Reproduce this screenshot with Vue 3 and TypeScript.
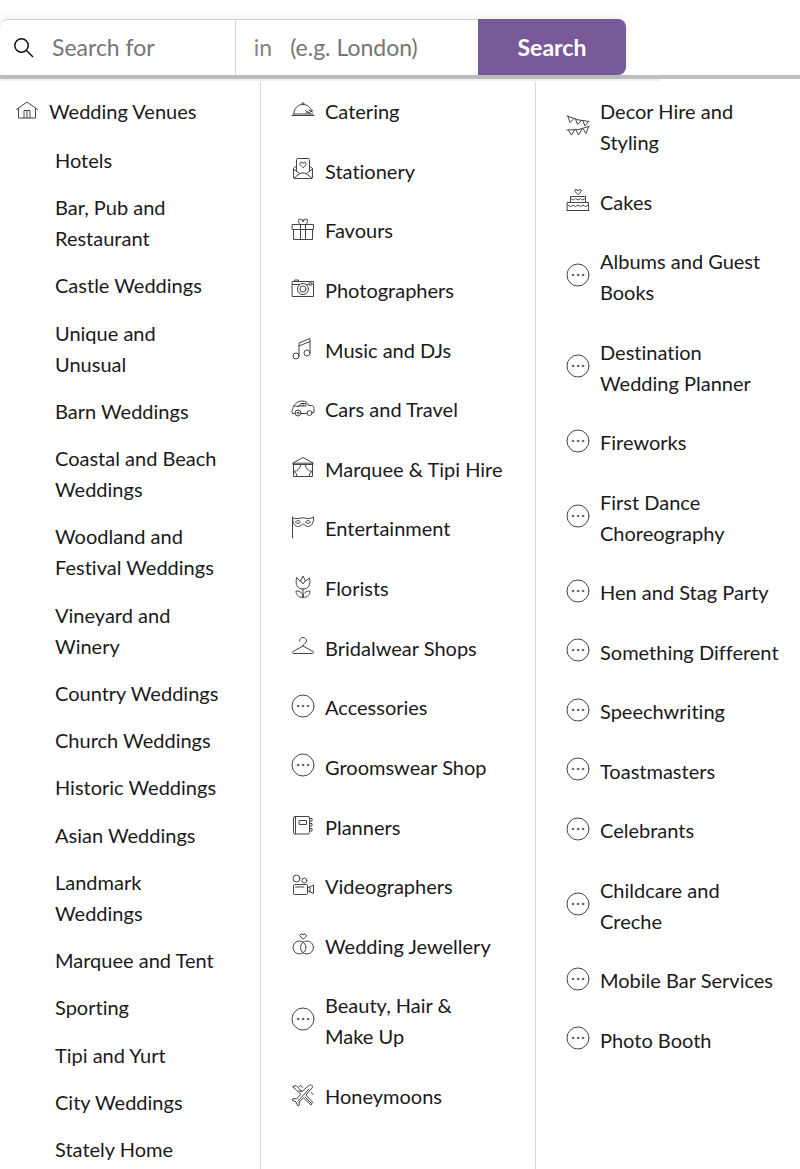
<script setup lang="ts">
interface Item {
  label: string
  icon: string
}

const venues: string[] = [
  'Hotels', 'Bar, Pub and Restaurant', 'Castle Weddings', 'Unique and Unusual', 'Barn Weddings',
  'Coastal and Beach Weddings', 'Woodland and Festival Weddings', 'Vineyard and Winery',
  'Country Weddings', 'Church Weddings', 'Historic Weddings', 'Asian Weddings',
  'Landmark Weddings', 'Marquee and Tent', 'Sporting', 'Tipi and Yurt', 'City Weddings', 'Stately Home',
]

const icons: Record<string, string> = {
  house: 'M1.5 11.5 12 4l10.5 7.5M3.500 10.500v9.500h17v-9.500M9 20v-7.500h6V20M12 12.500V20',
  dome: 'M1 17.500h22M2 16h20M3 15.500C3 10 7 6.500 12 6.500c4 0 7.500 2.500 8.500 6M11 6.500V5h2v1.500M14.500 12.500l3 2.500 4-2.500M15 15.500l2-2 2.500 2.500M18 12l3.500 2',
  letter: 'M5.5 14V2.500q0-1 1-1h11q1 0 1 1V14M5.500 9l-3 2.500V20q0 1.500 1.500 1.500h16q1.500 0 1.500-1.500v-8.500L18.500 9M2.500 12l6 4.500M21.500 12l-6 4.500M3 21l6-4.500q3-1.500 6 0l6 4.500M12 10.500 9 7.500q-.5-2 1.200-2.300Q11.500 5 12 6.500q.5-1.500 1.800-1.300Q15.500 5.500 15 7.500z',
  gift: 'M1.5 7.500h21v5h-21zM2.500 12.500v10h19v-10M9.500 7.500v15M14.500 7.500v15M12 4.500Q11 2 9 2T7.500 4.500 9 7.500M12 4.500Q13 2 15 2t1.500 2.500-1.500 3M12 2.500v2',
  camera: 'M1.5 5.500h21v15h-21zM3.500 5.500V4h4v1.500M1.500 8.500h7M15.500 8.500h1.500M18.500 7h2.500v2h-2.500zM17.500 13a5.500 5.500 0 1 1-11 0 5.500 5.500 0 0 1 11 0M15 13a3 3 0 1 1-6 0 3 3 0 0 1 6 0',
  music: 'M8 20V7l11-4.500V17M8 10l11-4.500M8 20a3 3 0 1 1-6 0 3 3 0 0 1 6 0M19 17a3 3 0 1 1-6 0 3 3 0 0 1 6 0',
  car: 'M4 17.500H1.500q-1-2 0-4C3 8 6.500 5 11 5c4 0 6 1.500 6.500 4.500h4q1.500.5 1.500 3v4h-2M10 17.500h6M3 10l5 .5L10 7.500h5V10H7M12 7.500V10M10 17a3 3 0 1 1-6 0 3 3 0 0 1 6 0M21 17a2.500 2.500 0 1 1-5 0 2.500 2.500 0 0 1 5 0M8 17a1 1 0 1 1-2 0 1 1 0 0 1 2 0',
  marquee: 'M2 8 12 2.500 22 8zM2.500 8v13.500h19V8M2 9.500h20M10 9.500c-1 4-3 6.500-7 7M14 9.500c1 4 3 6.500 7 7M3 16.500q3 1 3 5M21 16.500q-3 1-3 5',
  mask: 'M1.500 23V2M1.500 3q3 1 6 .5Q12 2 16.500 3.500q3 .5 6-1.500C23 8 20 12 16.500 11.500 14 11 13 9 12 9s-2 2-4.500 2.500C4 12 1.500 8 1.500 3M4.500 7q2.500-3 5 0-2.500 3-5 0M14.500 7q2.500-3 5 0-2.500 3-5 0',
  flower: 'M5.500 3c-1.500 7 1 11 6.500 11s8-4 6.500-11l-4 3L12 1 9.500 6zM9.500 5.500 12 9l2.500-3.500M12 14v8.500M12 22.500c-5 0-7-3-7-6.500 4 0 7 2 7 6.500 0-4.500 3-6.500 7-6.500 0 3.500-2 6.500-7 6.500',
  hanger: 'M8.500 7C8.500 5 10 3.500 12 3.500s3.500 1.500 3.500 3.500c0 2.500-3.500 2.500-3.500 5L2 17.500c-1 .7-.5 2 .5 2h19c1 0 1.500-1.300.5-2L12 12',
  more: 'M23 12a11 11 0 1 1-22 0 11 11 0 0 1 22 0M7.800 12a.8.8 0 1 1-1.600 0 .8.8 0 0 1 1.600 0M12.800 12a.8.8 0 1 1-1.600 0 .8.8 0 0 1 1.600 0M17.800 12a.8.8 0 1 1-1.600 0 .8.8 0 0 1 1.600 0',
  planner: 'M4 3.500h13q1.500 0 1.500 1.500v14.500q0 1.500-1.500 1.500H4q-1.500 0-1.500-1.500V5Q2.500 3.500 4 3.500M4.500 3.500V21M8.500 7.500h7v4h-7zM18.500 5.500H21v2.500h-2.500M18.500 10.500H21V13h-2.500M18.500 15.500H21V18h-2.500',
  video: 'M2.500 12.500q0-1 1-1h12q1 0 1 1v8q0 1-1 1h-12q-1 0-1-1zM16.500 15l6-3v8.500l-6-3M19 14v5M4.500 14H13M9 5.500a3.500 3.500 0 1 1-7 0 3.500 3.500 0 0 1 7 0M16 7.500a2.500 2.500 0 1 1-5 0 2.500 2.500 0 0 1 5 0',
  rings: 'M15 15.500a6.500 6.500 0 1 1-13 0 6.500 6.500 0 0 1 13 0M22.500 15.500a6.500 6.500 0 1 1-13 0 6.500 6.500 0 0 1 13 0M12 7 8.500 3.500 10 2h1.200l.8 1 .8-1H14L15.500 3.500z',
  plane: 'M2 3.500l3-1 6 6 7-6c2-1.500 4.500 0 3 2.500l-6 7 6.500 7-1.500 3-7.500-7-4.500 4 .5 3-1.500 1-2-4-4-2 1-1.500 3.500.5 4-4.500zM8 8l3 .5M14 14l6 6M7 18 18 6M8 3.500l2-1 1.500 2M20.500 9.500l1.500 2',
  bunting: 'M1 3q11 5 22 5.500M2 3.500l2 6 4-4M9.500 6l2 5.500L15.500 7.500M17 8l2 5 3.500-4.500M1 17q11 1 22-3.500M2.500 17.500l3 4.500L8.500 17M10 17l2.500 5 3.500-6M17 15.500l3 5 2.500-6.500',
  cake: 'M1.500 14.500h21v8h-21zM4.500 14.500v-6h15v6M1 22.500h22M2 17q2.500 3 5 0 2.500 3 5 0 2.500 3 5 0 2.500 3 5 0M5 10.500q2.500 3 4.500 0 2.500 3 5 0 2.500 3 4.500 0M12 6.500 9 3.500q-.5-2 1-2T12 3q.5-1.500 2-1.500t1 2z',
}

const services: Item[] = [
  { label: 'Catering', icon: 'dome' },
  { label: 'Stationery', icon: 'letter' },
  { label: 'Favours', icon: 'gift' },
  { label: 'Photographers', icon: 'camera' },
  { label: 'Music and DJs', icon: 'music' },
  { label: 'Cars and Travel', icon: 'car' },
  { label: 'Marquee & Tipi Hire', icon: 'marquee' },
  { label: 'Entertainment', icon: 'mask' },
  { label: 'Florists', icon: 'flower' },
  { label: 'Bridalwear Shops', icon: 'hanger' },
  { label: 'Accessories', icon: 'more' },
  { label: 'Groomswear Shop', icon: 'more' },
  { label: 'Planners', icon: 'planner' },
  { label: 'Videographers', icon: 'video' },
  { label: 'Wedding Jewellery', icon: 'rings' },
  { label: 'Beauty, Hair & Make\u00a0Up', icon: 'more' },
  { label: 'Honeymoons', icon: 'plane' },
]

const extras: Item[] = [
  { label: 'Decor Hire and Styling', icon: 'bunting' },
  { label: 'Cakes', icon: 'cake' },
  ...[
    'Albums and Guest Books', 'Destination Wedding\u00a0Planner', 'Fireworks', 'First Dance Choreography',
    'Hen and Stag Party', 'Something Different', 'Speechwriting', 'Toastmasters', 'Celebrants',
    'Childcare and Creche', 'Mobile Bar Services', 'Photo Booth',
  ].map((label) => ({ label, icon: 'more' })),
]
</script>

<template>
  <div class="page">
    <header class="top">
      <form class="search" @submit.prevent>
        <label class="field what">
          <svg class="glass" viewBox="0 0 20 20" aria-hidden="true"><circle cx="7.5" cy="7.5" r="6.7" /><path d="M12.300 12.300 19 19" /></svg>
          <input type="text" placeholder="Search for" aria-label="Search for" />
        </label>
        <label class="field where">
          <span>in</span>
          <input type="text" placeholder="(e.g. London)" />
        </label>
        <button type="submit">Search</button>
      </form>
    </header>
    <nav class="menu">
      <div class="column first">
        <a href="#" class="entry">
          <svg class="icon" viewBox="0 0 24 24" aria-hidden="true"><path :d="icons.house" /></svg>
          <span>Wedding Venues</span>
        </a>
        <ul class="venues">
          <li v-for="venue in venues" :key="venue"><a href="#">{{ venue }}</a></li>
        </ul>
      </div>
      <ul class="column second">
        <li v-for="item in services" :key="item.label">
          <a href="#" class="entry">
            <svg class="icon" viewBox="0 0 24 24" aria-hidden="true"><path :d="icons[item.icon]" /></svg>
            <span>{{ item.label }}</span>
          </a>
        </li>
      </ul>
      <ul class="column third">
        <li v-for="item in extras" :key="item.label">
          <a href="#" class="entry">
            <svg class="icon" viewBox="0 0 24 24" aria-hidden="true"><path :d="icons[item.icon]" /></svg>
            <span>{{ item.label }}</span>
          </a>
        </li>
      </ul>
    </nav>
  </div>
</template>

<style>
body {
  margin: 0;
  background: #fff;
}
</style>

<style scoped>
.page {
  display: flex;
  flex-direction: column;
  min-height: 100vh;
  box-sizing: border-box;
  font-family: Lato, "Liberation Sans", sans-serif;
  font-size: 20px;
  font-variant-ligatures: none;
  line-height: 31px;
  color: #1a1a1a;
}
ul {
  list-style: none;
  margin: 0;
  padding: 0;
}
a {
  color: inherit;
  text-decoration: none;
}
.top {
  padding-top: 19px;
  border-bottom: 4px solid #c1c1c1;
}
.search {
  display: grid;
  grid-template-columns: 236fr 242fr 149fr;
  width: 78.3%;
  height: 56px;
  border-radius: 8px;
  box-shadow: 0 0 10px rgba(0, 0, 0, 0.1);
}
.field {
  display: flex;
  align-items: center;
  box-sizing: border-box;
  min-width: 0;
  background: #fff;
  border-top: 1px solid #d4d4d4;
  border-right: 1px solid #d4d4d4;
  font-size: 23px;
  color: #858585;
}
.what {
  gap: 18px;
  padding-left: 14px;
  border-radius: 8px 0 0 8px;
}
.where {
  gap: 18px;
  padding-left: 18px;
  border-right: 0;
}
.glass {
  flex: none;
  width: 20px;
  height: 20px;
  fill: none;
  stroke: #111;
  stroke-width: 1.5;
}
input {
  flex: 1;
  min-width: 0;
  padding: 0;
  border: 0;
  outline: 0;
  background: none;
  font: inherit;
  color: #333;
}
input::placeholder {
  color: #757575;
  opacity: 1;
}
button {
  padding: 0;
  border: 0;
  border-radius: 0 8px 8px 0;
  background: #795a98;
  color: #fff;
  font: bold 23px Lato, "Liberation Sans", sans-serif;
}
.menu {
  flex: 1;
  display: grid;
  grid-template-columns: 261fr 275fr 264fr;
  padding-top: 3px;
  background: linear-gradient(#f0f0f0, #f0f0f0) 0 0 / 82.6% 2px no-repeat;
}
.column {
  display: flex;
  flex-direction: column;
  justify-content: space-between;
  box-sizing: border-box;
  padding-top: 14px;
}
.first {
  padding-left: 15px;
  padding-right: 30px;
  padding-bottom: 4px;
  border-right: 1px solid #d8d8d8;
  gap: 18px;
}
.venues {
  flex: 1;
  display: flex;
  flex-direction: column;
  justify-content: space-between;
  gap: 16px;
  padding-left: 40px;
}
.second {
  padding-left: 30px;
  padding-right: 30px;
  padding-bottom: 57px;
  border-right: 1px solid #d8d8d8;
}
.third {
  padding-left: 30px;
  padding-right: 16px;
  padding-bottom: 113px;
}
.entry {
  display: flex;
  align-items: center;
  gap: 10px;
}
.icon {
  flex: none;
  width: 24px;
  height: 24px;
  margin-bottom: 4px;
  fill: none;
  stroke: #444;
  stroke-width: 1;
  stroke-linecap: round;
  stroke-linejoin: round;
}
</style>
